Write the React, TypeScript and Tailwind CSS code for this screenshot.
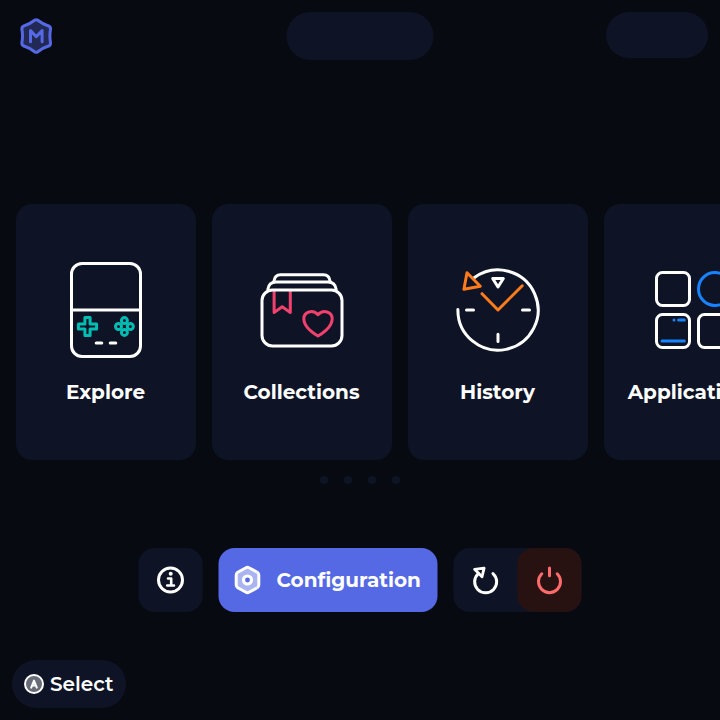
import React from "react";

const line = {
  fill: "none",
  strokeWidth: 3,
  strokeLinecap: "round" as const,
  strokeLinejoin: "round" as const,
};

function Logo() {
  return (
    <svg className="h-9 w-8 shrink-0" viewBox="20 18 32 36" {...line}>
      <path
        d="M34.6 20.3Q36.2 19.1 37.8 20.3Q42.5 24 48 25.7Q50.8 26.5 50.5 29.3Q49.3 36 50.5 42.7Q50.8 45.5 48 46.3Q42.5 48 37.8 51.7Q36.2 52.9 34.6 51.7Q29.9 48 24.4 46.3Q21.6 45.5 21.9 42.7Q23.1 36 21.9 29.3Q21.6 26.5 24.4 25.7Q29.9 24 34.6 20.3Z"
        fill="#222955"
        stroke="#5569e4"
      />
      <path d="M30.5 41.8V30.5L36.3 36.7L42.1 30.5V41.8" stroke="#5569e4" />
    </svg>
  );
}

function ExploreIcon() {
  return (
    <svg className="size-24" viewBox="58 262 96 96" {...line}>
      <rect x="71.5" y="263.5" width="69" height="93" rx="10.5" stroke="#fff" />
      <path d="M72 310H140" stroke="#fff" />
      <path d="M96.2 343H101.8M110.2 343H115.8" stroke="#fff" />
      <path
        d="M84.9 317.4H90.1V323.9H96.6V329.1H90.1V335.6H84.9V329.1H78.4V323.9H84.9Z"
        stroke="#00bdb4"
      />
      <g stroke="#00bdb4">
        <circle cx="124.4" cy="320.6" r="3" />
        <circle cx="118.5" cy="326.5" r="3" />
        <circle cx="130.3" cy="326.5" r="3" />
        <circle cx="124.4" cy="332.4" r="3" />
      </g>
    </svg>
  );
}

function CollectionsIcon() {
  return (
    <svg className="size-24" viewBox="254 262 96 96" {...line}>
      <g stroke="#f2416d">
        <path d="M274.1 291V312.4L282.2 306.8L290.3 312.4V291" strokeLinecap="butt" />
        <path d="M318 336C316 335 303.8 328 303.8 318.8C303.8 311.8 312.8 309 318 314.7C323.2 309 332.2 311.8 332.2 318.8C332.2 328 320 335 318 336Z" />
      </g>
      <g stroke="#fff">
        <rect x="262" y="290" width="80" height="56" rx="10.5" />
        <path d="M267.8 289.5C268.5 284.5 271.5 282 276 282H328C332.5 282 335.5 284.5 336.2 289.5" />
        <path d="M274 281C274.5 277 277 274.8 280.5 274.8H323.5C327 274.8 329.5 277 330 281" />
      </g>
    </svg>
  );
}

function HistoryIcon() {
  return (
    <svg className="size-24" viewBox="450 262 96 96" {...line}>
      <g stroke="#fff">
        <path d="M457.9 309.5A40.1 40.1 0 1 0 474.2 277.8" />
        <path d="M466.5 310H473.5M522.5 310H529.5M498 334.2V341.5" />
        <path d="M492.7 278.5H503.3L498 287Z" />
      </g>
      <g stroke="#ff7b1c">
        <path d="M482 293.7L498 310L522.2 285.8" />
        <path d="M467 272.8L480.3 286.2L463.9 289.2Z" />
      </g>
    </svg>
  );
}

function ApplicationsIcon() {
  return (
    <svg className="size-24" viewBox="646 262 96 96" {...line}>
      <g stroke="#fff">
        <rect x="656.5" y="272.5" width="33" height="33" rx="6" />
        <rect x="656.5" y="314.5" width="33" height="33" rx="6" />
        <rect x="698.5" y="314.5" width="33" height="33" rx="6" />
      </g>
      <g stroke="#1783ff">
        <circle cx="715" cy="289" r="16.5" />
        <path d="M662 341H684.3M674 320H674.01M678.6 320H684.3" />
      </g>
    </svg>
  );
}

function InfoIcon() {
  return (
    <svg className="size-8" viewBox="154.5 564 32 32" {...line} stroke="#fff">
      <circle cx="170.5" cy="580" r="12" />
      <circle cx="170.7" cy="573.8" r="2" fill="#fff" stroke="none" />
      <path d="M168 578.5H171.2V585.5M167.2 585.5H174" strokeWidth={2.6} />
    </svg>
  );
}

function ConfigIcon() {
  return (
    <svg className="size-8 shrink-0" viewBox="231.5 564 32 32" {...line} stroke="#fff">
      <path
        d="M246 567.7Q247.5 566.9 249 567.7L257.3 572.3Q258.8 573.2 258.8 574.9V585.1Q258.8 586.8 257.3 587.7L249 592.3Q247.5 593.1 246 592.3L237.7 587.7Q236.2 586.8 236.2 585.1V574.9Q236.2 573.2 237.7 572.3Z"
        fill="#aab4f1"
      />
      <circle cx="247.5" cy="580" r="4" fill="#5569e4" strokeWidth={3.2} />
    </svg>
  );
}

function RestartIcon() {
  return (
    <svg className="size-8" viewBox="469.5 564 32 32" {...line} stroke="#fff">
      <path d="M478.3 573.6A11 11 0 1 0 493 573.6" />
      <path d="M474.6 569.3L484.1 568.2L482 576.8Z" strokeWidth={2.8} />
    </svg>
  );
}

function PowerIcon() {
  return (
    <svg className="size-8" viewBox="533.5 564 32 32" {...line} stroke="#ff6b6b">
      <path d="M541.8 573.8A11 11 0 1 0 557.2 573.8M549.5 568V575.8" />
    </svg>
  );
}

function AButtonIcon() {
  return (
    <svg className="size-5 shrink-0" viewBox="24 674 20 20" {...line} stroke="#fff">
      <circle cx="34" cy="684" r="9" fill="#686c79" strokeWidth={2} />
      <path d="M31.2 687.6L34 680.6L36.8 687.6M32.4 685.4H35.6" strokeWidth={2} />
    </svg>
  );
}

const cards = [
  { label: "Explore", Icon: ExploreIcon },
  { label: "Collections", Icon: CollectionsIcon },
  { label: "History", Icon: HistoryIcon },
  { label: "Applications", Icon: ApplicationsIcon },
];

export default function App() {
  return (
    <div className="flex h-[720px] w-[720px] flex-col overflow-hidden bg-[#070a11] font-['Montserrat','Inter',sans-serif] text-xl leading-6 text-white">
      <header className="grid h-[72px] shrink-0 grid-cols-[1fr_147px_1fr] items-start px-3 pt-3">
        <div className="pt-1.5 pl-2">
          <Logo />
        </div>
        <div className="ml-[73.5px] h-12 w-[147px] -translate-x-1/2 rounded-full bg-[#0e1426]" />
        <div className="h-[46px] w-[102px] justify-self-end rounded-full bg-[#0e1426]" />
      </header>

      <main className="flex flex-1 flex-col pt-[132px]">
        <div className="flex gap-4 px-4">
          {cards.map(({ label, Icon }) => (
            <div
              key={label}
              className="flex h-64 w-[180px] shrink-0 flex-col items-center rounded-2xl bg-[#0e1426] pt-[58px]"
            >
              <Icon />
              <span className="mt-[22px] mr-px font-bold whitespace-nowrap">{label}</span>
            </div>
          ))}
        </div>
        <div className="mt-4 flex justify-center gap-4">
          {cards.map(({ label }) => (
            <i key={label} className="size-2 rounded-full bg-[#0e1426]" />
          ))}
        </div>
        <div className="mt-16 ml-[360px] flex w-max -translate-x-1/2 gap-4">
          <button className="flex size-16 items-center justify-center rounded-2xl bg-[#0e1426]">
            <InfoIcon />
          </button>
          <button className="flex h-16 w-[219px] items-center rounded-2xl bg-[#5569e4] pl-[13px]">
            <ConfigIcon />
            <span className="ml-[13px] font-bold">Configuration</span>
          </button>
          <div className="flex rounded-2xl bg-[#0e1426]">
            <button className="flex size-16 items-center justify-center">
              <RestartIcon />
            </button>
            <button className="flex size-16 items-center justify-center rounded-2xl bg-[#271111]">
              <PowerIcon />
            </button>
          </div>
        </div>
      </main>

      <footer className="flex shrink-0 px-3 pb-3">
        <div className="flex h-12 w-[114px] items-center gap-1.5 rounded-full bg-[#0e1426] pl-3">
          <AButtonIcon />
          <span className="font-semibold">Select</span>
        </div>
      </footer>
    </div>
  );
}
